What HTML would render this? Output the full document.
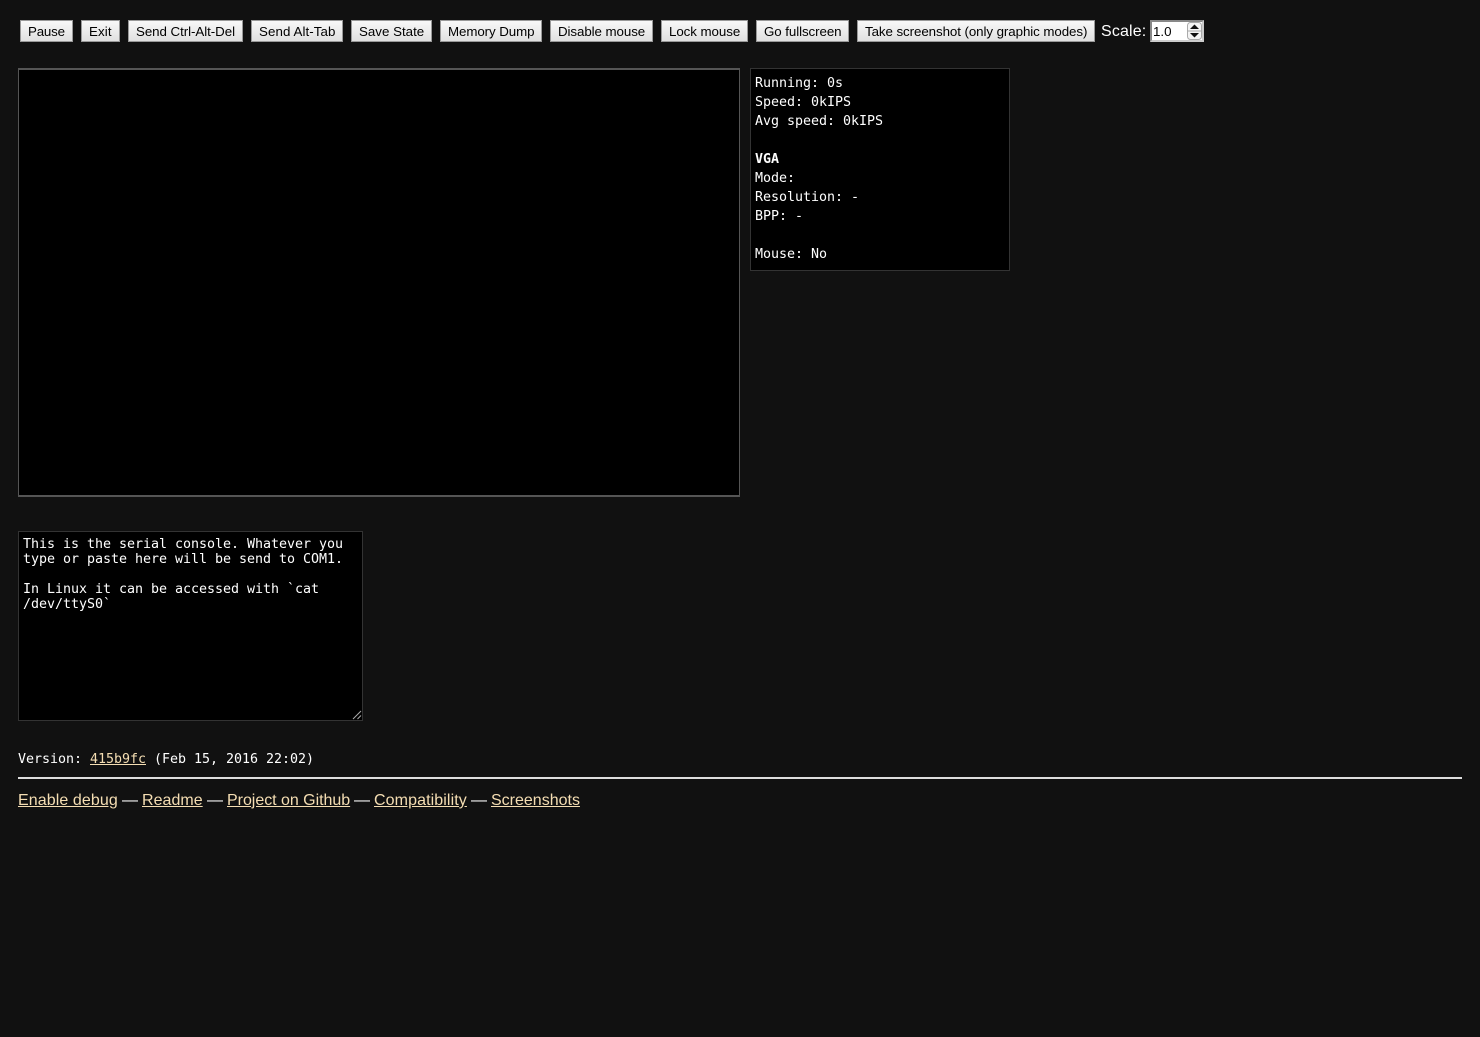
<!DOCTYPE html>
<html>
<head>
<meta charset="utf-8">
<title>Virtual x86</title>
<style>
html,body{margin:0;padding:0;background:#111;width:1480px;height:1037px;overflow:hidden}
body{position:relative;color:#fff;font:16px "Liberation Sans",Arial,sans-serif}
.b{position:absolute;top:20px;height:22px;box-sizing:border-box;margin:0;padding:1px 0 0 7px;border:1px solid #999;
background:linear-gradient(#f8f8f8,#e0e0e0);color:#000;font:13.33px/20px "Liberation Sans",Arial,sans-serif;text-align:left;white-space:nowrap;overflow:hidden}
.scale{position:absolute;left:1101px;top:23px;line-height:18px;white-space:nowrap;letter-spacing:.15px}
.num{position:absolute;left:1150px;top:20px;width:54px;height:22px;box-sizing:border-box;background:#fff;border:2px solid;border-color:#888 #ccc #ccc #888;color:#000;font:13.33px/20px "Liberation Sans",Arial,sans-serif;padding-left:1px}
.spin{position:absolute;left:35px;top:0;width:15px;height:18px}
.screen{position:absolute;left:18px;top:68px;width:722px;height:429px;box-sizing:border-box;background:#000;border:1px solid #555;border-width:2px 1px}
.mono{font-family:"DejaVu Sans Mono","Liberation Mono",monospace;font-size:13.33px;letter-spacing:-.025px}
.status{position:absolute;left:750px;top:68px;width:260px;height:203px;box-sizing:border-box;background:#000;border:1px solid #333;padding:5px 4px 3px;line-height:19px;white-space:pre;color:#fff}
.status b{font-weight:bold}
.console{position:absolute;left:18px;top:531px;width:345px;height:190px;box-sizing:border-box;background:#000;border:1px solid #333;padding:5px 4px 3px;line-height:15px;white-space:pre;color:#fff}
.grip{position:absolute;right:0;bottom:0;width:10px;height:10px}
.ver{position:absolute;left:18px;top:750px;line-height:19px;white-space:pre;color:#fff}
a{color:#f5deb3;text-decoration:underline}
.hr{position:absolute;left:18px;top:777px;width:1444px;height:2px;background:#ddd}
.l{position:absolute;top:792px;line-height:18px;white-space:pre;color:#fff}
</style>
</head>
<body>
<button class="b" style="left:20px;width:53px;letter-spacing:-.2px">Pause</button>
<button class="b" style="left:81px;width:39px;letter-spacing:.1px">Exit</button>
<button class="b" style="left:128px;width:115px;letter-spacing:-.06px">Send Ctrl-Alt-Del</button>
<button class="b" style="left:251px;width:92px;letter-spacing:.08px">Send Alt-Tab</button>
<button class="b" style="left:351px;width:81px">Save State</button>
<button class="b" style="left:440px;width:102px;letter-spacing:-.09px">Memory Dump</button>
<button class="b" style="left:550px;width:103px;letter-spacing:-.08px">Disable mouse</button>
<button class="b" style="left:661px;width:87px;letter-spacing:-.07px">Lock mouse</button>
<button class="b" style="left:756px;width:93px;letter-spacing:-.08px">Go fullscreen</button>
<button class="b" style="left:857px;width:238px;letter-spacing:-.08px">Take screenshot (only graphic modes)</button>
<div class="scale">Scale:</div>
<div class="num">1.0
<svg class="spin" viewBox="0 0 15 18"><rect x="0.5" y="0.5" width="14" height="17" rx="3" fill="#f4f4f4" stroke="#aaa"/><line x1="1" y1="9" x2="14" y2="9" stroke="#aaa"/><path d="M7.5 2.5L12 7H3Z" fill="#111"/><path d="M7.5 15.5L12 11H3Z" fill="#111"/></svg>
</div>
<div class="screen"></div>
<div class="status mono">Running: 0s
Speed: 0kIPS
Avg speed: 0kIPS

<b>VGA</b>
Mode: 
Resolution: -
BPP: -

Mouse: No</div>
<div class="console mono">This is the serial console. Whatever you
type or paste here will be send to COM1.

In Linux it can be accessed with `cat
/dev/ttyS0`<svg class="grip" viewBox="0 0 10 10"><path d="M1 9L9 1M5.5 9L9 5.5" stroke="#aaa" stroke-width="1"/></svg></div>
<div class="ver mono">Version: <a href="#">415b9fc</a> (Feb 15, 2016 22:02)</div>
<div class="hr"></div>
<a class="l" href="#" style="left:18px;color:#f5deb3;letter-spacing:.09px">Enable debug</a>
<span class="l" style="left:122px">—</span>
<a class="l" href="#" style="left:142px;color:#f5deb3;letter-spacing:.03px">Readme</a>
<span class="l" style="left:207px">—</span>
<a class="l" href="#" style="left:227px;color:#f5deb3;letter-spacing:-.03px">Project on Github</a>
<span class="l" style="left:354px">—</span>
<a class="l" href="#" style="left:374px;color:#f5deb3;letter-spacing:.1px">Compatibility</a>
<span class="l" style="left:471px">—</span>
<a class="l" href="#" style="left:491px;color:#f5deb3">Screenshots</a>
</body>
</html>
